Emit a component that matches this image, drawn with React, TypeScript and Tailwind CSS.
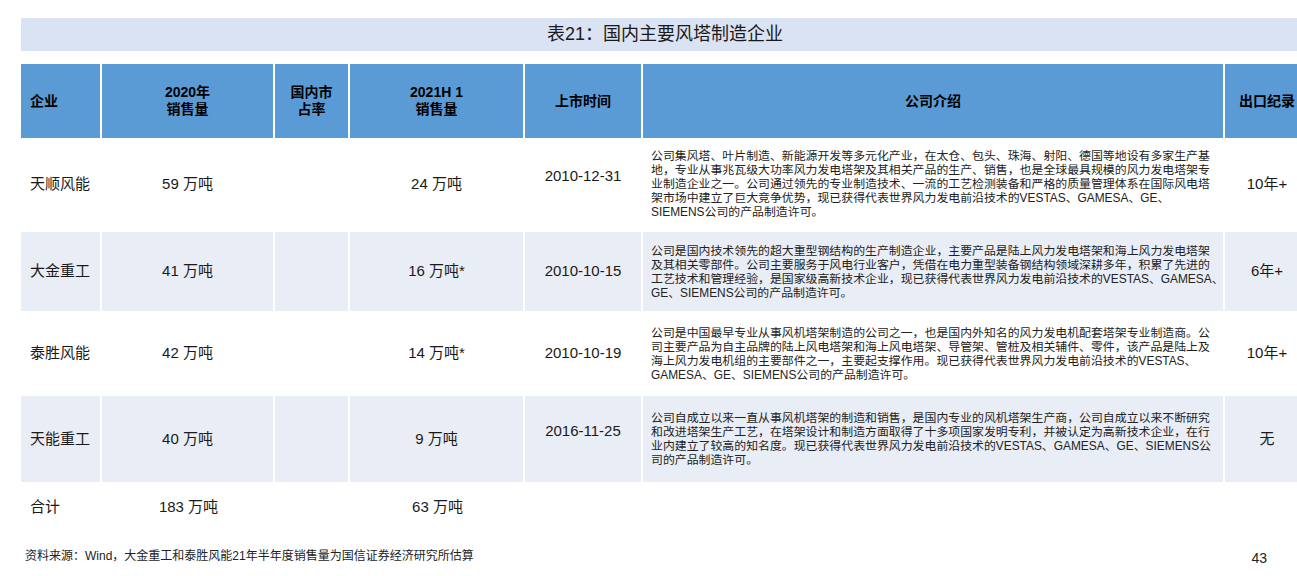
const cols = "grid grid-cols-[81px_173px_75px_175px_118px_582px_84px]";

type Row = {
  name: string;
  y2020: string;
  y2021: string;
  date: string;
  dateUp?: boolean;
  intro: string[];
  exportRec: string;
  shaded: boolean;
};

const rows: Row[] = [
  {
    name: "天顺风能",
    y2020: "59 万吨",
    y2021: "24 万吨",
    date: "2010-12-31",
    dateUp: true,
    intro: [
      "公司集风塔、叶片制造、新能源开发等多元化产业，在太仓、包头、珠海、射阳、德国等地设有多家生产基",
      "地，专业从事兆瓦级大功率风力发电塔架及其相关产品的生产、销售，也是全球最具规模的风力发电塔架专",
      "业制造企业之一。公司通过领先的专业制造技术、一流的工艺检测装备和严格的质量管理体系在国际风电塔",
      "架市场中建立了巨大竞争优势，现已获得代表世界风力发电前沿技术的VESTAS、GAMESA、GE、",
      "SIEMENS公司的产品制造许可。",
    ],
    exportRec: "10年+",
    shaded: false,
  },
  {
    name: "大金重工",
    y2020: "41 万吨",
    y2021: "16 万吨*",
    date: "2010-10-15",
    intro: [
      "公司是国内技术领先的超大重型钢结构的生产制造企业，主要产品是陆上风力发电塔架和海上风力发电塔架",
      "及其相关零部件。公司主要服务于风电行业客户，凭借在电力重型装备钢结构领域深耕多年，积累了先进的",
      "工艺技术和管理经验，是国家级高新技术企业，现已获得代表世界风力发电前沿技术的VESTAS、GAMESA、",
      "GE、SIEMENS公司的产品制造许可。",
    ],
    exportRec: "6年+",
    shaded: true,
  },
  {
    name: "泰胜风能",
    y2020: "42 万吨",
    y2021: "14 万吨*",
    date: "2010-10-19",
    intro: [
      "公司是中国最早专业从事风机塔架制造的公司之一，也是国内外知名的风力发电机配套塔架专业制造商。公",
      "司主要产品为自主品牌的陆上风电塔架和海上风电塔架、导管架、管桩及相关辅件、零件，该产品是陆上及",
      "海上风力发电机组的主要部件之一，主要起支撑作用。现已获得代表世界风力发电前沿技术的VESTAS、",
      "GAMESA、GE、SIEMENS公司的产品制造许可。",
    ],
    exportRec: "10年+",
    shaded: false,
  },
  {
    name: "天能重工",
    y2020: "40 万吨",
    y2021: "9 万吨",
    date: "2016-11-25",
    dateUp: true,
    intro: [
      "公司自成立以来一直从事风机塔架的制造和销售，是国内专业的风机塔架生产商，公司自成立以来不断研究",
      "和改进塔架生产工艺，在塔架设计和制造方面取得了十多项国家发明专利，并被认定为高新技术企业，在行",
      "业内建立了较高的知名度。现已获得代表世界风力发电前沿技术的VESTAS、GAMESA、GE、SIEMENS公",
      "司的产品制造许可。",
    ],
    exportRec: "无",
    shaded: true,
  },
];

const heights = ["h-[94px]", "h-[81px]", "h-[83px]", "h-[88px]"];

function DataRow({ row, h }: { row: Row; h: string }) {
  const bg = row.shaded ? "bg-[#e9edf5]" : "bg-white";
  const cell = `${bg} border-r-2 border-b-2 border-white flex items-center text-[15px] text-[#1a1a1a]`;
  return (
    <div className={`${cols} ${h}`}>
      <div className={`${cell} pl-[9px]`}>{row.name}</div>
      <div className={`${cell} justify-center`}>{row.y2020}</div>
      <div className={cell} />
      <div className={`${cell} justify-center`}>{row.y2021}</div>
      <div className={`${cell} justify-center ${row.dateUp ? "pb-[15px]" : ""}`}>{row.date}</div>
      <div className={`${cell} pl-[8px]`}>
        <div className="text-[11.9px] leading-[14px] text-[#222]">
          {row.intro.map((line, i) => (
            <div key={i} className="whitespace-nowrap">
              {line}
            </div>
          ))}
        </div>
      </div>
      <div className={`${bg} border-b-2 border-white flex items-center justify-center text-[15px] text-[#1a1a1a]`}>
        {row.exportRec}
      </div>
    </div>
  );
}

export default function App() {
  const head = "bg-[#5b9bd5] border-r-2 border-white flex items-center font-bold text-[14px] leading-[17px] text-black";
  return (
    <div
      className="w-[1297px] h-[576px] overflow-hidden bg-white"
      style={{ fontFamily: '"Liberation Sans", "Noto Sans CJK SC", sans-serif' }}
    >
      <div className="w-[1288px] ml-[21px] pt-[18px]">
        <div className="h-[33px] bg-[#dae3f3] flex items-center justify-center text-[18px] text-[#1a1a1a]">
          表21：国内主要风塔制造企业
        </div>

        <div className={`${cols} h-[74px] mt-[13px]`}>
          <div className={`${head} pl-[9px]`}>企业</div>
          <div className={`${head} justify-center text-center`}>
            2020年
            <br />
            销售量
          </div>
          <div className={`${head} justify-center text-center`}>
            国内市
            <br />
            占率
          </div>
          <div className={`${head} justify-center text-center`}>
            2021H 1
            <br />
            销售量
          </div>
          <div className={`${head} justify-center`}>上市时间</div>
          <div className={`${head} justify-center`}>公司介绍</div>
          <div className="bg-[#5b9bd5] flex items-center justify-center font-bold text-[14px] text-black">
            出口纪录
          </div>
        </div>

        {rows.map((r, i) => (
          <DataRow key={r.name} row={r} h={heights[i]} />
        ))}

        <div className={`${cols} h-[46px] text-[15px] text-[#1a1a1a]`}>
          <div className="flex items-center pl-[9px]">合计</div>
          <div className="flex items-center justify-center">183 万吨</div>
          <div />
          <div className="flex items-center justify-center">63 万吨</div>
          <div />
          <div />
          <div />
        </div>

        <div className="flex items-end justify-between w-[1246px] pl-[4px] mt-[14px]">
          <div className="text-[12px] text-[#222]">
            资料来源：Wind，大金重工和泰胜风能21年半年度销售量为国信证券经济研究所估算
          </div>
          <div className="text-[14px] text-[#222] translate-y-[4px]">43</div>
        </div>
      </div>
    </div>
  );
}
